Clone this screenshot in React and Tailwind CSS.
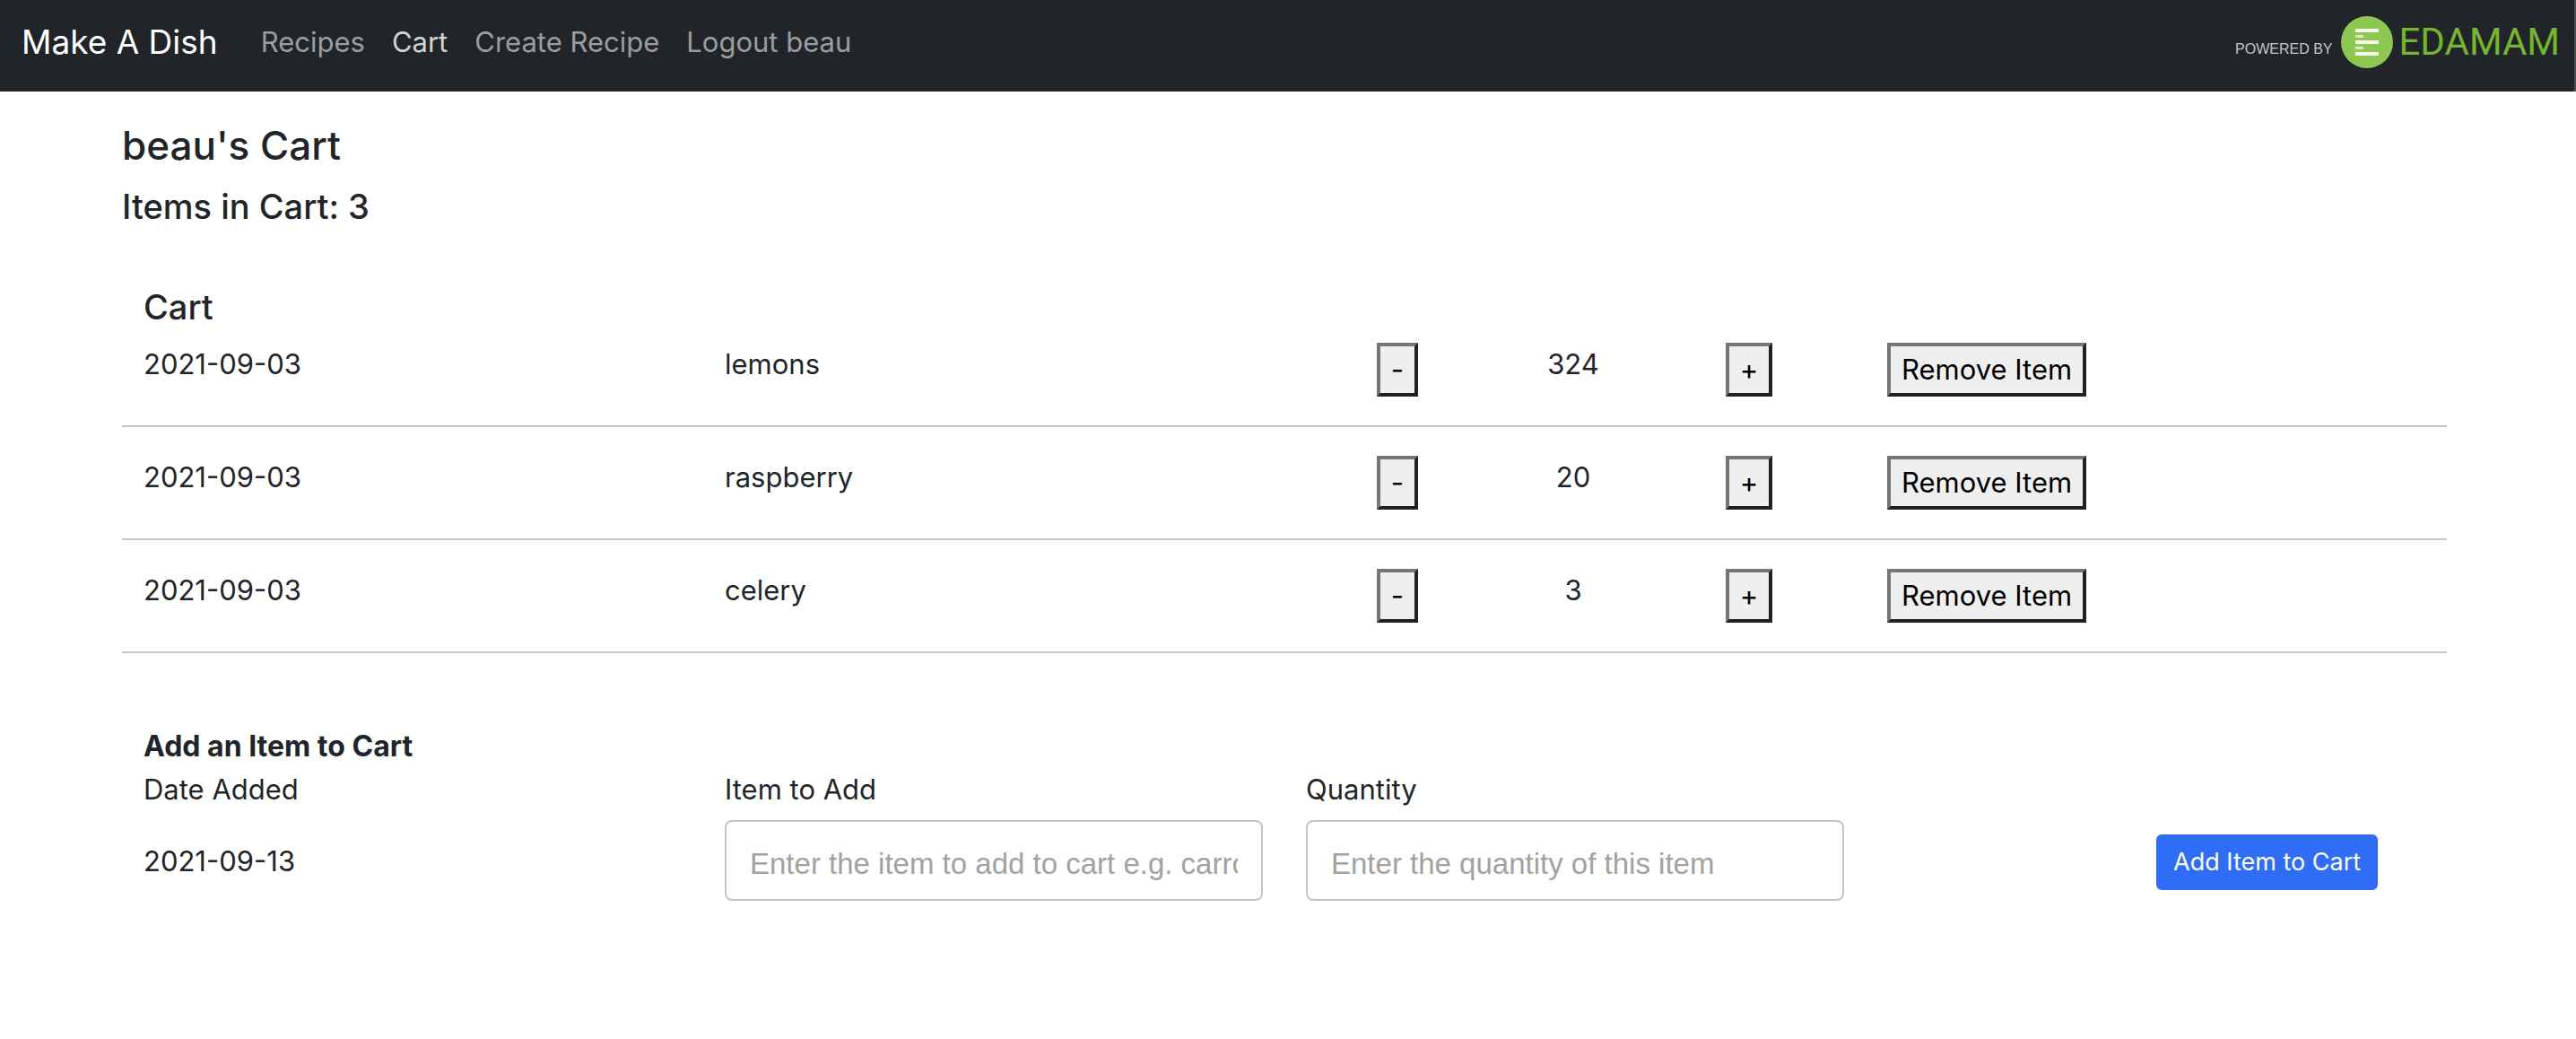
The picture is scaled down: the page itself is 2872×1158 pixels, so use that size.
const items = [
  { date: "2021-09-03", name: "lemons", quantity: 324 },
  { date: "2021-09-03", name: "raspberry", quantity: 20 },
  { date: "2021-09-03", name: "celery", quantity: 3 },
];

const links = [
  { label: "Recipes" },
  { label: "Cart", current: true },
  { label: "Create Recipe" },
  { label: "Logout beau" },
];

function EdamamBadge() {
  return (
    <a href="#edamam" className="ml-auto flex items-center">
      <span className="pt-4 font-['Liberation_Sans',sans-serif] text-[16px] leading-6 text-[#c4c5c6]">
        POWERED BY
      </span>
      <svg viewBox="0 0 58 58" className="ml-[10px] size-[58px]" aria-hidden="true">
        <circle cx="29" cy="29" r="29" fill="#8cc852" />
        <g stroke="#ffffff">
          <path d="M16 16H42M16 29H42M16 42H42" strokeWidth="4" opacity="0.9" />
          <path d="M16 22.5H25M16 35.5H25" strokeWidth="3" opacity="0.65" />
        </g>
      </svg>
      <span className="ml-[6px] font-[Roboto,sans-serif] text-[42px] leading-[48px] text-[#76b52e]">
        EDAMAM
      </span>
    </a>
  );
}

function Navbar() {
  return (
    <nav className="flex items-center border-r-2 border-[#4b4f52] bg-[#212529] pt-[17px] pr-4 pb-[25px] pl-6">
      <a href="#home" className="text-[37px] leading-[60px] text-white">
        Make A Dish
      </a>
      <ul className="ml-12 flex gap-[30px]">
        {links.map((link) => (
          <li key={link.label}>
            <a
              href="#nav"
              aria-current={link.current ? "page" : undefined}
              className={
                link.current
                  ? "text-[31px] leading-[48px] text-[#d3d4d4]"
                  : "text-[31px] leading-[48px] text-[#9b9d9e]"
              }
            >
              {link.label}
            </a>
          </li>
        ))}
      </ul>
      <EdamamBadge />
    </nav>
  );
}

function PlainButton({ children, label }) {
  return (
    <button
      type="button"
      aria-label={label}
      className="border-4 border-t-[#767676] border-r-[#212121] border-b-[#212121] border-l-[#767676] bg-[#efefef] px-3 py-[2px] text-[31px] leading-[48px] text-black"
    >
      {children}
    </button>
  );
}

function CartRow({ item }) {
  return (
    <li className="grid grid-cols-4 items-start border-b-2 border-[#c8c9ca] pb-8">
      <span className="px-6">{item.date}</span>
      <span className="px-6">{item.name}</span>
      <div className="grid grid-cols-3 items-start justify-items-center pr-8 pl-7">
        <PlainButton label={`Decrease ${item.name}`}>-</PlainButton>
        <span>{item.quantity}</span>
        <PlainButton label={`Increase ${item.name}`}>+</PlainButton>
      </div>
      <div className="px-6">
        <PlainButton>Remove Item</PlainButton>
      </div>
    </li>
  );
}

const fieldClass =
  "mt-[10px] h-[90px] w-full rounded-lg border-2 border-[#c4c4c4] bg-white px-[26px] pt-2 font-['Liberation_Sans',sans-serif] text-[33px] text-[#212529] placeholder:text-[#a2a2a2]";

function AddItemForm() {
  return (
    <form className="mt-20">
      <h3 className="px-6 text-[32px] leading-[48px] font-bold">Add an Item to Cart</h3>
      <div className="grid grid-cols-4">
        <div className="px-6">
          <p>Date Added</p>
          <p className="mt-8">2021-09-13</p>
        </div>
        <div className="px-6">
          <label htmlFor="item" className="block">Item to Add</label>
          <input
            id="item"
            type="text"
            placeholder="Enter the item to add to cart e.g. carrots"
            className={fieldClass}
          />
        </div>
        <div className="px-6">
          <label htmlFor="quantity" className="block">Quantity</label>
          <input
            id="quantity"
            type="text"
            placeholder="Enter the quantity of this item"
            className={fieldClass}
          />
        </div>
        <div className="pt-[74px] pl-[50%]">
          <button
            type="button"
            className="rounded-md border-2 border-[#306df6] bg-[#306df6] px-[17px] py-2 text-[27px] leading-[42px] whitespace-nowrap text-white"
          >
            Add Item to Cart
          </button>
        </div>
      </div>
    </form>
  );
}

export default function App() {
  return (
    <div className="min-h-screen bg-white font-[Inter,sans-serif] text-[31px] leading-[48px] text-[#212529]">
      <Navbar />
      <div className="pr-2">
        <main className="mx-auto max-w-[2592px] pt-[30px]">
          <h1 className="text-[44px] leading-[60px] font-medium">beau's Cart</h1>
          <h2 className="mt-[14px] text-[38px] leading-[48px] font-medium">Items in Cart: 3</h2>
          <section className="mt-16">
            <h2 className="px-6 text-[38px] leading-[48px] font-medium">Cart</h2>
            <ul className="mt-4 space-y-8">
              {items.map((item) => (
                <CartRow key={item.name} item={item} />
              ))}
            </ul>
          </section>
          <AddItemForm />
        </main>
      </div>
    </div>
  );
}
